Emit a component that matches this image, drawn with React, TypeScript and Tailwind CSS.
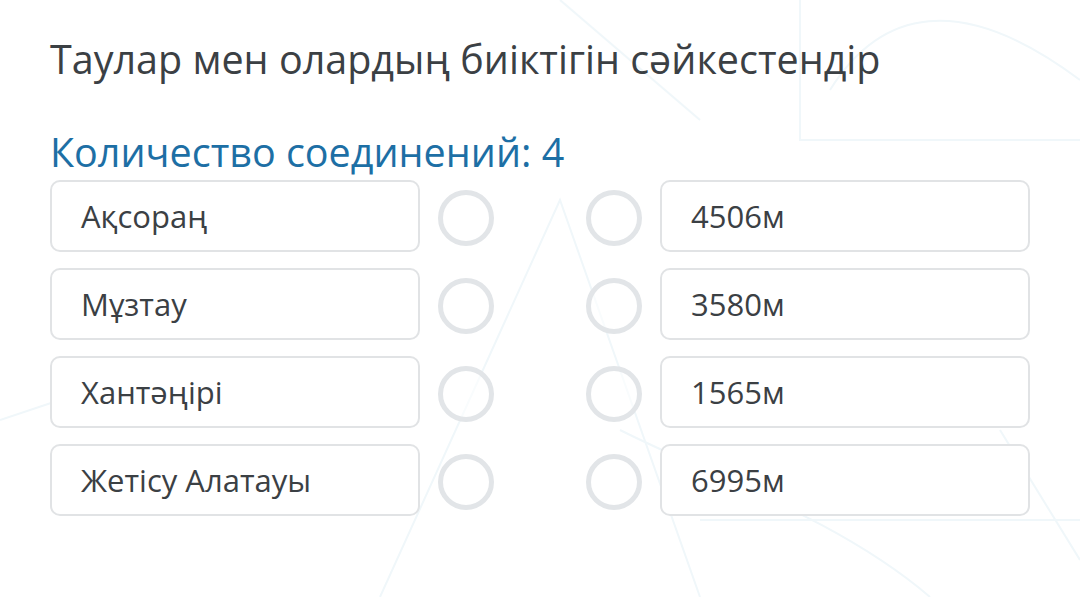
import React from 'react';

const left = ['Ақсораң', 'Мұзтау', 'Хантәңірі', 'Жетісу Алатауы'];
const right = ['4506м', '3580м', '1565м', '6995м'];

const Doodles: React.FC = () => (
  <svg className="absolute inset-0 w-full h-full pointer-events-none" viewBox="0 0 1080 597" fill="none">
    <g stroke="#f0f7fa" strokeWidth="2">
      <path d="M800 0 L800 140 L1080 140" />
      <path d="M830 90 C 880 10, 960 -10, 1080 80" />
      <path d="M560 0 L700 120" />
      <path d="M380 597 L560 200 L700 597" />
      <path d="M620 430 C 720 480, 840 520, 930 597" />
      <path d="M1000 430 L1080 560" />
      <path d="M0 420 L60 400" />
      <path d="M700 520 L1080 520" />
    </g>
  </svg>
);

const Circle: React.FC = () => (
  <div className="w-[56px] h-[56px] rounded-full border-[5px] border-[#e2e5e8] bg-white/60" />
);

const App: React.FC = () => {
  return (
    <div className="relative w-[1080px] h-[597px] bg-white overflow-hidden font-['Open_Sans',sans-serif]">
      <Doodles />
      <div className="relative pl-[50px] pt-[33px]">
        <h1 className="text-[39.5px] leading-[52px] text-[#3b4044]">
          Таулар мен олардың биіктігін сәйкестендір
        </h1>
        <h2 className="mt-[41px] text-[39.5px] leading-[52px] text-[#1d6fa5]">
          Количество соединений: 4
        </h2>
        <div className="mt-[2px] flex flex-col gap-[16px]">
          {left.map((l, i) => (
            <div key={i} className="flex items-center">
              <div className="w-[370px] h-[72px] rounded-[10px] border-2 border-[#e1e3e5] bg-white flex items-center pl-[29px] text-[31px] text-[#3b4044]">
                {l}
              </div>
              <div className="ml-[18px] mt-[4px]">
                <Circle />
              </div>
              <div className="ml-[92px] mt-[4px]">
                <Circle />
              </div>
              <div className="ml-[18px] w-[370px] h-[72px] rounded-[10px] border-2 border-[#e1e3e5] bg-white flex items-center pl-[29px] text-[31px] text-[#3b4044]">
                {right[i]}
              </div>
            </div>
          ))}
        </div>
      </div>
    </div>
  );
};

export default App;
